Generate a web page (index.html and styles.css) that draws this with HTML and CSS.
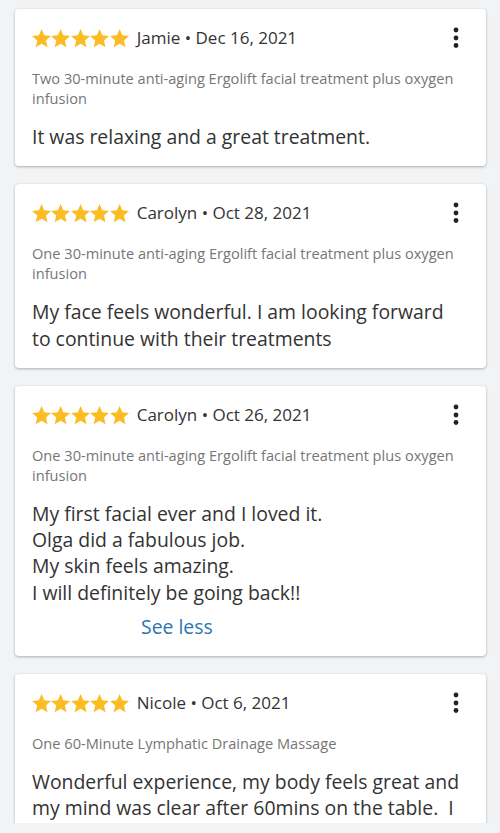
FILE: index.html
```html
<!DOCTYPE html>
<html lang="en">
<head>
<meta charset="utf-8">
<title>Reviews</title>
<link rel="stylesheet" href="styles.css">
</head>
<body>
<svg width="0" height="0" class="defs" aria-hidden="true">
  <defs>
    <symbol id="star" viewBox="2 2 20 19.27">
      <path d="M12 17.27L18.18 21l-1.64-7.03L22 9.24l-7.19-.61L12 2 9.19 8.63 2 9.24l5.46 4.73L5.82 21z"/>
    </symbol>
    <symbol id="kebab" viewBox="0 0 8 24">
      <circle cx="4" cy="4" r="2.4"/>
      <circle cx="4" cy="12" r="2.4"/>
      <circle cx="4" cy="19.5" r="2.4"/>
    </symbol>
  </defs>
</svg>
<main class="list">
  <article class="card">
    <header class="head">
      <span class="stars"><svg><use href="#star"/></svg><svg><use href="#star"/></svg><svg><use href="#star"/></svg><svg><use href="#star"/></svg><svg><use href="#star"/></svg></span>
      <span class="who">Jamie • Dec 16, 2021</span>
      <svg class="more"><use href="#kebab"/></svg>
    </header>
    <p class="service">Two 30-minute anti-aging Ergolift facial treatment plus oxygen infusion</p>
    <p class="text">It was relaxing and a great treatment.</p>
  </article>
  <article class="card">
    <header class="head">
      <span class="stars"><svg><use href="#star"/></svg><svg><use href="#star"/></svg><svg><use href="#star"/></svg><svg><use href="#star"/></svg><svg><use href="#star"/></svg></span>
      <span class="who">Carolyn • Oct 28, 2021</span>
      <svg class="more"><use href="#kebab"/></svg>
    </header>
    <p class="service">One 30-minute anti-aging Ergolift facial treatment plus oxygen infusion</p>
    <p class="text">My face feels wonderful. I am looking forward to continue with their treatments</p>
  </article>
  <article class="card">
    <header class="head">
      <span class="stars"><svg><use href="#star"/></svg><svg><use href="#star"/></svg><svg><use href="#star"/></svg><svg><use href="#star"/></svg><svg><use href="#star"/></svg></span>
      <span class="who">Carolyn • Oct 26, 2021</span>
      <svg class="more"><use href="#kebab"/></svg>
    </header>
    <p class="service">One 30-minute anti-aging Ergolift facial treatment plus oxygen infusion</p>
    <p class="text">My first facial ever and I loved it.<br>Olga did a fabulous job.<br>My skin feels amazing.<br>I will definitely be going back!!</p>
    <a class="toggle" href="#">See less</a>
  </article>
  <article class="card">
    <header class="head">
      <span class="stars"><svg><use href="#star"/></svg><svg><use href="#star"/></svg><svg><use href="#star"/></svg><svg><use href="#star"/></svg><svg><use href="#star"/></svg></span>
      <span class="who">Nicole • Oct 6, 2021</span>
      <svg class="more"><use href="#kebab"/></svg>
    </header>
    <p class="service">One 60-Minute Lymphatic Drainage Massage</p>
    <p class="text">Wonderful experience, my body feels great and my mind was clear after 60mins on the table.&nbsp; I loved every minute of it and will be back.</p>
  </article>
</main>
</body>
</html>
```

FILE: styles.css
```css
html, body {
  margin: 0;
  padding: 0;
  background: #f2f3f5;
  font-family: "Open Sans", "Noto Sans", sans-serif;
  color: #333;
}

.defs {
  position: absolute;
  width: 0;
  height: 0;
}

.list {
  height: 823px;
  overflow: hidden;
  box-sizing: border-box;
  padding: 9px 14px 0 15px;
  display: flex;
  flex-direction: column;
  gap: 18px;
}

.card {
  flex: none;
  background: #fff;
  border-radius: 4px;
  box-shadow: 0 1px 3px rgba(0, 0, 0, 0.28), 0 0 1px rgba(0, 0, 0, 0.08);
  padding: 17px 24px 16px 17px;
  display: flex;
  flex-direction: column;
}

.head {
  display: flex;
  align-items: center;
  height: 24px;
}

.stars {
  display: flex;
  gap: 0.2px;
  fill: #fbbc24;
}

.stars svg {
  width: 19.2px;
  height: 18.5px;
  display: block;
}

.who {
  margin-left: 8px;
  font-size: 17px;
  line-height: 24px;
  color: #333;
}

.more {
  margin-left: auto;
  margin-right: 2px;
  width: 8px;
  height: 24px;
  fill: #222;
}

.service {
  margin: 18px 0 0;
  font-size: 14.6px;
  line-height: 20px;
  color: #767676;
}

.text {
  margin: 16px 0 0;
  font-size: 19.4px;
  line-height: 26.3px;
  color: #333;
}

.toggle {
  margin: 8px 0 0 109px;
  font-size: 19.4px;
  line-height: 26px;
  color: #2a76b5;
  text-decoration: none;
  align-self: flex-start;
}
```
